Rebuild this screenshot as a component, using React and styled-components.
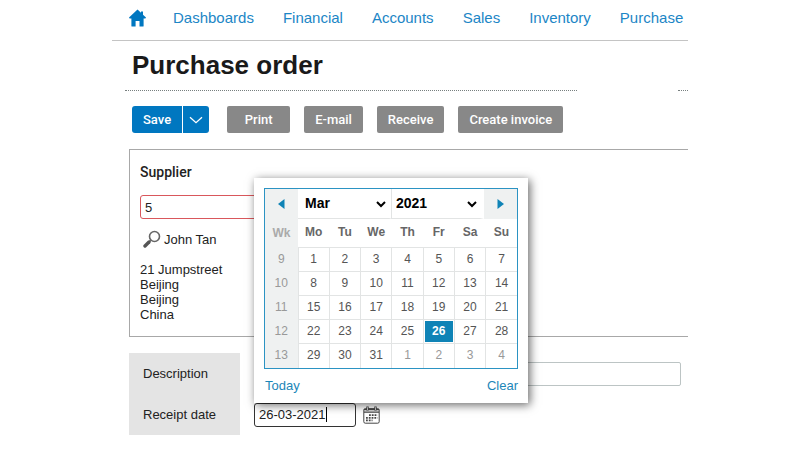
import React from 'react';
import styled, { createGlobalStyle } from 'styled-components';

const GlobalStyle = createGlobalStyle`
    * {
        box-sizing: border-box;
    }
    body {
        margin: 0;
        background: #fff;
        color: #222;
        font-family: 'Liberation Sans', Arial, sans-serif;
        font-size: 13px;
        line-height: 15px;
    }
    button, input, select {
        font-family: inherit;
    }
`;

const Page = styled.div`
    padding: 0 112px;
`;

const Nav = styled.nav`
    display: flex;
    align-items: center;
    gap: 29px;
    height: 41px;
    padding: 0 0 4px 16px;
    border-bottom: 1px solid #c4c4c4;
    white-space: nowrap;
    overflow: hidden;
`;

const NavLink = styled.a`
    color: #1c86c6;
    font-size: 15px;
    line-height: 18px;
    text-decoration: none;
`;

const HomeLink = styled(NavLink)`
    display: flex;
    width: 18px;
    margin-right: -2px;
`;

const Title = styled.h1`
    margin: 0;
    padding: 9px 20px 10px;
    color: #1a1a1a;
    font-size: 26px;
    line-height: 30px;
`;

const Rules = styled.div`
    display: flex;
    gap: 101px;
    padding-left: 13px;
`;

const Rule = styled.div`
    flex: ${props => props.$short ? '0 0 10px' : '1'};
    border-top: 1px dotted #777f7f;
`;

const Toolbar = styled.div`
    display: flex;
    gap: 14px;
    padding: 15px 20px 16px;
`;

const Button = styled.button`
    height: 27px;
    min-width: ${props => props.$wide ? '63px' : '0'};
    padding: 0 11px;
    border: 0;
    border-radius: 2px;
    background: #888;
    color: #fff;
    font-family: Roboto, 'Liberation Sans', sans-serif;
    font-size: 13px;
    font-weight: 500;
    white-space: nowrap;
`;

const SplitButton = styled.div`
    display: flex;
    gap: 1px;
    margin-right: 4px;
`;

const SaveButton = styled(Button)`
    border-radius: 3px 0 0 3px;
    background: #0077c0;
`;

const SaveMenuButton = styled(SaveButton)`
    display: flex;
    align-items: center;
    padding: 0 6px;
    border-radius: 0 3px 3px 0;
`;

const Panel = styled.section`
    height: 188px;
    margin-left: 17px;
    padding: 15px 10px;
    border: 1px solid #a8a8a8;
    border-right: 0;
`;

const PanelLabel = styled.label`
    display: block;
    margin-bottom: 15px;
    font-family: Roboto, 'Liberation Sans', sans-serif;
    font-size: 14px;
    font-weight: 500;
`;

const SupplierInput = styled.input`
    display: block;
    width: 240px;
    height: 24px;
    padding: 0 4px;
    border: 1px solid #d9575c;
    border-radius: 3px;
    color: #222;
    font-size: 13px;
`;

const Contact = styled.div`
    display: flex;
    align-items: center;
    gap: 3px;
    padding: 11px 0 14px 3px;
`;

const Address = styled.address`
    font-style: normal;
`;

const Form = styled.form`
    display: grid;
    grid-template-columns: 111px 1fr;
    column-gap: 14px;
    margin: 16px 7px 0 17px;
`;

const FormLabel = styled.label`
    display: flex;
    align-items: center;
    height: 41px;
    padding-left: 14px;
    background: #e4e4e4;
`;

const FormCell = styled.div`
    display: flex;
    align-items: center;
    height: 41px;
`;

const DescriptionInput = styled.input`
    flex: 1;
    height: 24px;
    border: 1px solid #bcc4c4;
    border-radius: 2px;
`;

const DateField = styled.div`
    position: relative;
    display: flex;
    align-items: center;
    width: 102px;
    height: 24px;
    padding-left: 4px;
    border: 1px solid #333;
    border-radius: 3px;
    background: #fff;
`;

const DateInput = styled.input`
    field-sizing: content;
    padding: 0;
    border: 0;
    outline: 0;
    background: none;
    color: #222;
    font-size: 13px;
`;

const Caret = styled.span`
    width: 1px;
    height: 15px;
    background: #000;
`;

const IconButton = styled.button`
    display: flex;
    margin-left: 7px;
    padding: 0;
    border: 0;
    background: none;
`;

const Popup = styled.div`
    position: absolute;
    bottom: calc(100% + 1px);
    left: -1px;
    width: 274px;
    padding: 10px;
    background: #fff;
    box-shadow: 2px 2px 9px rgba(0, 0, 0, 0.6);
`;

const Calendar = styled.div`
    border: 1px solid #2b93c3;
`;

const MonthBar = styled.div`
    display: flex;
    height: 30px;
`;

const ArrowButton = styled.button`
    display: flex;
    align-items: center;
    justify-content: center;
    width: 33px;
    padding: 0;
    border: 0;
    background: #eff1f1;
`;

const MonthSelect = styled.select`
    flex: 1;
    min-width: 0;
    padding: 0 0 0 3px;
    border: 0;
    border-right: 4px solid #fff;
    border-bottom: 1px solid #e2e4e4;
    border-radius: 0;
    background: #fff;
    color: #000;
    font-size: 14px;
    font-weight: 700;
`;

const YearSelect = styled(MonthSelect)`
    padding-left: 0;
    margin-left: -2px;
    border-left: 1px solid #e2e4e4;
`;

const Days = styled.table`
    width: 100%;
    table-layout: fixed;
    border-collapse: collapse;
    color: #555;
    font-size: 12px;
    text-align: center;
`;

const DayName = styled.th`
    width: ${props => props.$week ? '33px' : 'auto'};
    height: 29px;
    padding: 0;
    background: ${props => props.$week ? '#eff1f1' : '#fff'};
    color: ${props => props.$week ? '#aaa' : '#666'};
`;

const Week = styled.th`
    height: 24px;
    padding: 0;
    background: #eff1f1;
    color: #999;
    font-weight: 400;
`;

const Day = styled.td`
    height: 24px;
    padding: 0;
    border: 1px solid #e2e4e4;
    border-width: 1px 0 0 1px;
    color: ${props => props.$muted ? '#999' : '#555'};
`;

const Selected = styled.span`
    display: block;
    margin: 0 1px;
    background: #0f83b6;
    color: #fff;
    font-weight: 700;
    line-height: 21px;
`;

const PopupFooter = styled.div`
    display: flex;
    justify-content: space-between;
    padding: 9px 0 0 1px;
`;

const TextButton = styled.button`
    padding: 0;
    border: 0;
    background: none;
    color: #1c86b8;
    font-size: 13px;
    line-height: 15px;
`;

const HomeIcon = () => (
    <svg width="18" height="18" viewBox="0 0 18 18" fill="#0077c0">
        <path d="M9.5 0.6 L13 3.8 V2.6 H15 V5.7 L18 8.6 L17.4 9.6 H15.6 V17 Q15.6 17.6 15 17.6 H11.5 V12 H7.6 V17.6 H4 Q3.4 17.6 3.4 17 V9.6 H1.6 L1 8.6 Z" />
    </svg>
);

const ChevronIcon = () => (
    <svg width="14" height="8" viewBox="0 0 14 8" fill="none" stroke="#fff" strokeWidth="1.3">
        <path d="M1 1.2 L7 6.7 L13 1.2" />
    </svg>
);

const SearchIcon = () => (
    <svg width="18" height="18" viewBox="0 0 18 18" fill="none" stroke="#666">
        <circle cx="11.5" cy="6.5" r="5" strokeWidth="1.6" />
        <path d="M7.8 10.2 L6.5 11.4" strokeWidth="1.5" />
        <path d="M6 12 L2 16" stroke="#555" strokeWidth="3.4" strokeLinecap="round" />
    </svg>
);

const CalendarIcon = () => (
    <svg width="17" height="18" viewBox="0 0 17 18" fill="none" stroke="#444">
        <rect x="0.8" y="2.6" width="15.4" height="14.6" rx="1.5" />
        <path d="M1 3.6 H16 M1 6.2 H16" strokeWidth="1.2" />
        <path d="M4.5 0.5 V4.5 M12.5 0.5 V4.5" strokeWidth="2.4" />
        <path d="M4.5 1.2 V4 M12.5 1.2 V4" stroke="#fff" strokeWidth="0.7" />
        <path d="M6 9.2 H14.5 M3 11.8 H14.5 M3 14.4 H9.5" strokeWidth="1.8" strokeDasharray="1.8 1" />
    </svg>
);

const Arrow = ({ next }) => (
    <svg width="7" height="10" viewBox="0 0 7 10" fill="#0f83b6">
        <path d={next ? 'M0.5 0 L7 5 L0.5 10 Z' : 'M6.5 0 L0 5 L6.5 10 Z'} />
    </svg>
);

const links = ['Dashboards', 'Financial', 'Accounts', 'Sales', 'Inventory', 'Purchase'];
const dayNames = ['Mo', 'Tu', 'We', 'Th', 'Fr', 'Sa', 'Su'];
const weeks = [9, 10, 11, 12, 13];

const DatePicker = () => (
    <Popup>
        <Calendar>
            <MonthBar>
                <ArrowButton type="button" aria-label="Previous month"><Arrow /></ArrowButton>
                <MonthSelect aria-label="Month" defaultValue="Mar">
                    <option>Mar</option>
                </MonthSelect>
                <YearSelect aria-label="Year" defaultValue="2021">
                    <option>2021</option>
                </YearSelect>
                <ArrowButton type="button" aria-label="Next month"><Arrow next /></ArrowButton>
            </MonthBar>
            <Days>
                <thead>
                    <tr>
                        <DayName $week>Wk</DayName>
                        {dayNames.map(name => <DayName key={name}>{name}</DayName>)}
                    </tr>
                </thead>
                <tbody>
                    {weeks.map((week, row) => (
                        <tr key={week}>
                            <Week>{week}</Week>
                            {dayNames.map((name, col) => {
                                const count = row * 7 + col + 1;
                                const day = count > 31 ? count - 31 : count;
                                return (
                                    <Day key={name} $muted={count > 31}>
                                        {count === 26 ? <Selected>{day}</Selected> : day}
                                    </Day>
                                );
                            })}
                        </tr>
                    ))}
                </tbody>
            </Days>
        </Calendar>
        <PopupFooter>
            <TextButton type="button">Today</TextButton>
            <TextButton type="button">Clear</TextButton>
        </PopupFooter>
    </Popup>
);

const App = () => {

    return (
        <>
            <GlobalStyle />
            <Page>
                <Nav>
                    <HomeLink href="#home" aria-label="Home"><HomeIcon /></HomeLink>
                    {links.map(link => <NavLink key={link} href={'#' + link}>{link}</NavLink>)}
                </Nav>
                <Title>Purchase order</Title>
                <Rules>
                    <Rule />
                    <Rule $short />
                </Rules>
                <Toolbar>
                    <SplitButton>
                        <SaveButton>Save</SaveButton>
                        <SaveMenuButton aria-label="More save options"><ChevronIcon /></SaveMenuButton>
                    </SplitButton>
                    <Button $wide>Print</Button>
                    <Button>E-mail</Button>
                    <Button>Receive</Button>
                    <Button>Create invoice</Button>
                </Toolbar>
                <Panel>
                    <PanelLabel htmlFor="supplier">Supplier</PanelLabel>
                    <SupplierInput id="supplier" defaultValue="5" />
                    <Contact><SearchIcon />John Tan</Contact>
                    <Address>
                        21 Jumpstreet<br />
                        Beijing<br />
                        Beijing<br />
                        China
                    </Address>
                </Panel>
                <Form>
                    <FormLabel htmlFor="description">Description</FormLabel>
                    <FormCell>
                        <DescriptionInput id="description" />
                    </FormCell>
                    <FormLabel htmlFor="receipt-date">Receipt date</FormLabel>
                    <FormCell>
                        <DateField>
                            <DateInput id="receipt-date" defaultValue="26-03-2021" />
                            <Caret />
                            <DatePicker />
                        </DateField>
                        <IconButton type="button" aria-label="Open calendar"><CalendarIcon /></IconButton>
                    </FormCell>
                </Form>
            </Page>
        </>
    );
}

export default App;
